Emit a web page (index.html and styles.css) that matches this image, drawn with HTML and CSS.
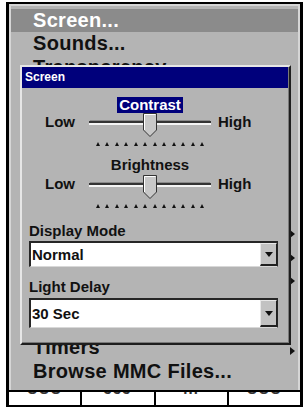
FILE: index.html
```html
<!DOCTYPE html>
<html>
<head>
<meta charset="utf-8">
<link rel="stylesheet" href="styles.css">
</head>
<body>
<div class="frame">
  <div class="menu">
    <div class="row sel"><span>Screen...</span></div>
    <div class="row"><span>Sounds...</span></div>
    <div class="row"><span>Transparency...</span></div>
    <div class="row"></div>
    <div class="row"></div>
    <div class="row"></div>
    <div class="row"></div>
    <div class="row"></div>
    <div class="row"></div>
    <div class="row"><span></span><i class="arr"></i></div>
    <div class="row"><span></span><i class="arr"></i></div>
    <div class="row"><span></span><i class="arr"></i></div>
    <div class="row"></div>
    <div class="row"></div>
    <div class="row"><span>Timers</span><i class="arr"></i></div>
    <div class="row"><span>Browse MMC Files...</span></div>

    <div class="dialog">
      <div class="title">Screen</div>

      <div class="lbl-row first"><span class="lbl focus">Contrast</span></div>
      <div class="srow">
        <span class="lo">Low</span>
        <svg class="track" width="122" height="24" viewBox="0 0 122 24">
          <rect x="1" y="7" width="120" height="1" fill="#8a8a8a"/>
          <rect x="0" y="8" width="122" height="2" fill="#333"/>
          <rect x="0" y="10" width="122" height="2" fill="#f4f4f4"/>
          <polygon points="54.5,0.5 67.5,0.5 67.5,17 61,23.5 54.5,17" fill="#c8c8c8" stroke="#333"/>
          <polyline points="55.5,17 55.5,1.5 66.5,1.5" fill="none" stroke="#fff"/>
        </svg>
        <span class="hi">High</span>
      </div>
      <div class="ticks"><i></i><i></i><i></i><i></i><i></i><i></i><i></i><i></i><i></i><i></i><i></i><i></i></div>

      <div class="lbl-row second"><span class="lbl">Brightness</span></div>
      <div class="srow">
        <span class="lo">Low</span>
        <svg class="track" width="122" height="24" viewBox="0 0 122 24">
          <rect x="1" y="7" width="120" height="1" fill="#8a8a8a"/>
          <rect x="0" y="8" width="122" height="2" fill="#333"/>
          <rect x="0" y="10" width="122" height="2" fill="#f4f4f4"/>
          <polygon points="54.5,0.5 67.5,0.5 67.5,17 61,23.5 54.5,17" fill="#c8c8c8" stroke="#333"/>
          <polyline points="55.5,17 55.5,1.5 66.5,1.5" fill="none" stroke="#fff"/>
        </svg>
        <span class="hi">High</span>
      </div>
      <div class="ticks"><i></i><i></i><i></i><i></i><i></i><i></i><i></i><i></i><i></i><i></i><i></i><i></i></div>

      <div class="field-label mode">Display Mode</div>
      <div class="combo short"><span class="val">Normal</span><span class="btn"></span></div>

      <div class="field-label delay">Light Delay</div>
      <div class="combo tall"><span class="val">30 Sec</span><span class="btn"></span></div>
    </div>
  </div>
  <div class="keys">
    <div class="key"><span>UUU</span></div>
    <div class="key"><span>JJJ</span></div>
    <div class="key"><span>...</span></div>
    <div class="key"><span>UUU</span></div>
  </div>
</div>
</body>
</html>
```

FILE: styles.css
```css
* { box-sizing: border-box; }

body {
  margin: 0;
  background: #fff;
  font-family: "Liberation Sans", Arial, sans-serif;
}

.frame {
  margin: 2px 0 0 6px;
  width: 297px;
  border: 2px solid #000;
  border-left-width: 3px;
  border-right-width: 3px;
}

.menu {
  position: relative;
  height: 386px;
  background: #b4b4b4;
  border: 2px solid #d6d6d6;
  border-bottom: none;
  padding-top: 3px;
}

.row {
  height: 23.4px;
  display: flex;
  align-items: center;
  justify-content: space-between;
  padding-left: 22px;
  font-weight: bold;
  font-size: 20px;
  line-height: 23.4px;
  letter-spacing: 0.3px;
  color: #111;
  white-space: nowrap;
}

.row.sel {
  background: #8b8b8b;
  color: #fff;
}

.arr {
  width: 0;
  height: 0;
  margin: 6px 3px 0 0;
  border-left: 5px solid #111;
  border-top: 4px solid transparent;
  border-bottom: 4px solid transparent;
}

.dialog {
  position: absolute;
  left: 9px;
  top: 59px;
  width: 271px;
  height: 280px;
  background: #b4b4b4;
  border: 2px solid;
  border-color: #e6e6e6 #1e1e1e #1e1e1e #e6e6e6;
  box-shadow: inset -1px -1px 0 #7a7a7a;
  color: #111;
  font-weight: bold;
  font-size: 15px;
}

.title {
  height: 21px;
  background: #00007b;
  color: #fff;
  font-size: 12px;
  line-height: 21px;
  padding-left: 3px;
  margin-right: 1px;
}

.lbl-row {
  margin-left: 67px;
  width: 122px;
  text-align: center;
  line-height: 16px;
  height: 16px;
}

.lbl-row.first { margin-top: 9px; }
.lbl-row.second { margin-top: 12px; }

.lbl { display: inline-block; padding: 0 2px; }
.lbl.focus { background: #00007b; color: #fff; }

.srow {
  display: flex;
  align-items: flex-start;
  margin-left: 23px;
  height: 24px;
}
.lbl-row.second + .srow { margin-top: 2px; }

.lo { width: 33px; margin-right: 11px; line-height: 18px; }
.hi { margin-left: 7px; line-height: 18px; }
.track { display: block; }

.ticks {
  display: flex;
  justify-content: space-between;
  margin: 5px 0 0 74px;
  width: 108px;
  height: 4px;
}
.ticks i {
  width: 0;
  height: 0;
  border-left: 2.5px solid transparent;
  border-right: 2.5px solid transparent;
  border-bottom: 4px solid #111;
}
.ticks + .lbl-row.second { margin-top: 11px; }
.ticks + .field-label.mode { margin-top: 15px; }

.field-label {
  margin-left: 7px;
  line-height: 16px;
  height: 16px;
}
.field-label.delay { margin-top: 12px; }

.combo {
  display: flex;
  margin: 2px 11px 0 7px;
  background: #fff;
  border-style: solid;
  border-width: 2px 1px 1px 2px;
  border-color: #262626 #262626 #d8d8d8 #262626;
}
.combo.short { height: 26px; }
.combo.tall { height: 30px; margin-top: 3px; }

.val {
  flex: 1;
  display: flex;
  align-items: center;
  padding-left: 1px;
}

.btn {
  width: 17px;
  background: #c2c2c2;
  border-left: 1px solid #e8e8e8;
  border-top: 1px solid #e8e8e8;
  border-right: 1px solid #202020;
  border-bottom: 2px solid #202020;
  display: flex;
  align-items: center;
  justify-content: center;
}
.btn::before {
  content: "";
  width: 0;
  height: 0;
  border-left: 4.5px solid transparent;
  border-right: 4.5px solid transparent;
  border-top: 5px solid #111;
}

.keys {
  display: grid;
  grid-template-columns: repeat(4, 1fr);
  column-gap: 2px;
  background: #000;
  border-top: 2px solid #000;
  height: 15px;
}

.key {
  background: #fff;
  overflow: hidden;
  text-align: center;
}
.key span {
  display: block;
  margin-top: -11px;
  font-weight: bold;
  font-size: 15px;
  line-height: 16px;
  letter-spacing: 1px;
  color: #333;
}
```
